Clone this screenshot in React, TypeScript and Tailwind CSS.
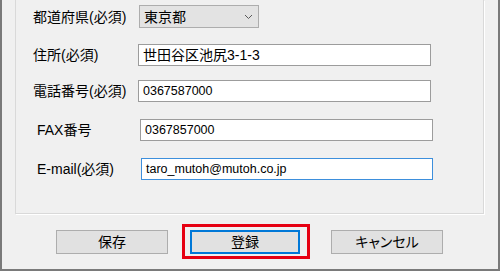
import React from 'react';

const cjk = "font-['Liberation_Sans','Noto_Sans_CJK_JP',sans-serif]";

interface FieldRowProps {
  label: string;
  value: string;
  labelPad: string;
  inputClass: string;
  textClass: string;
  rowClass: string;
}

const FieldRow: React.FC<FieldRowProps> = ({ label, value, labelPad, inputClass, textClass, rowClass }) => {
  return (
    <div className={`flex items-center ${rowClass}`}>
      <div className={`text-[14px] leading-none text-black ${labelPad}`}>{label}</div>
      <div className={`h-[22px] bg-white flex items-center pl-[4px] text-black ${inputClass}`}>
        <span className={`leading-none ${textClass}`}>{value}</span>
      </div>
    </div>
  );
};

const App: React.FC = () => {
  return (
    <div className={`w-[500px] h-[271px] bg-[#f0f0f0] border-x-2 border-b-2 border-[#7a7a7a] flex flex-col ${cjk}`}>
      {/* group box */}
      <div className="ml-[13px] mr-[14px] h-[214px] border border-t-0 border-[#d9d9d9] shadow-[1px_1px_0_#ffffff] flex flex-col">
        <div className="flex items-center mt-[5px]">
          <div className="w-[123px] pl-[17px] text-[14px] leading-none text-black">都道府県(必須)</div>
          <div className="w-[120px] h-[23px] bg-[#e3e3e3] border border-[#adadad] flex items-center justify-between pl-[4px] pr-[4px]">
            <span className="text-[14px] leading-none text-black">東京都</span>
            <svg width="9" height="6" viewBox="0 0 9 6" className="mr-[1px]">
              <polyline points="1,1 4.5,4.5 8,1" fill="none" stroke="#5a5a5a" strokeWidth="1" />
            </svg>
          </div>
        </div>

        <FieldRow
          label="住所(必須)"
          value="世田谷区池尻3-1-3"
          rowClass="mt-[16px]"
          labelPad="w-[122px] pl-[17px]"
          inputClass="w-[293px] border border-[#9c9c9c]"
          textClass="text-[14px]"
        />
        <FieldRow
          label="電話番号(必須)"
          value="0367587000"
          rowClass="mt-[14px]"
          labelPad="w-[122px] pl-[17px]"
          inputClass="w-[293px] border border-[#9c9c9c]"
          textClass="text-[12.5px]"
        />
        <FieldRow
          label="FAX番号"
          value="0367857000"
          rowClass="mt-[17px]"
          labelPad="w-[124px] pl-[21px]"
          inputClass="w-[293px] border border-[#9c9c9c]"
          textClass="text-[12.5px]"
        />
        <FieldRow
          label="E-mail(必須)"
          value="taro_mutoh@mutoh.co.jp"
          rowClass="mt-[17px]"
          labelPad="w-[125px] pl-[21px]"
          inputClass="w-[292px] border border-[#3d8fdc]"
          textClass="text-[12.5px]"
        />
      </div>

      {/* buttons */}
      <div className="flex items-center mt-[10px] pl-[54px]">
        <button className="w-[112px] h-[24px] bg-[#e1e1e1] border border-[#adadad] text-[14px] leading-none text-black">
          保存
        </button>
        <div className="ml-[14px] w-[128px] h-[35px] border-[3px] border-[#e60012] flex items-center pl-[5px]">
          <button className="w-[110px] h-[24px] bg-[#e1e1e1] border-2 border-[#0078d7] text-[14px] leading-none text-black">
            登録
          </button>
        </div>
        <button className="ml-[21px] w-[112px] h-[24px] bg-[#e1e1e1] border border-[#adadad] text-[14px] leading-none text-black [font-feature-settings:'palt']">
          キャンセル
        </button>
      </div>
    </div>
  );
};

export default App;
